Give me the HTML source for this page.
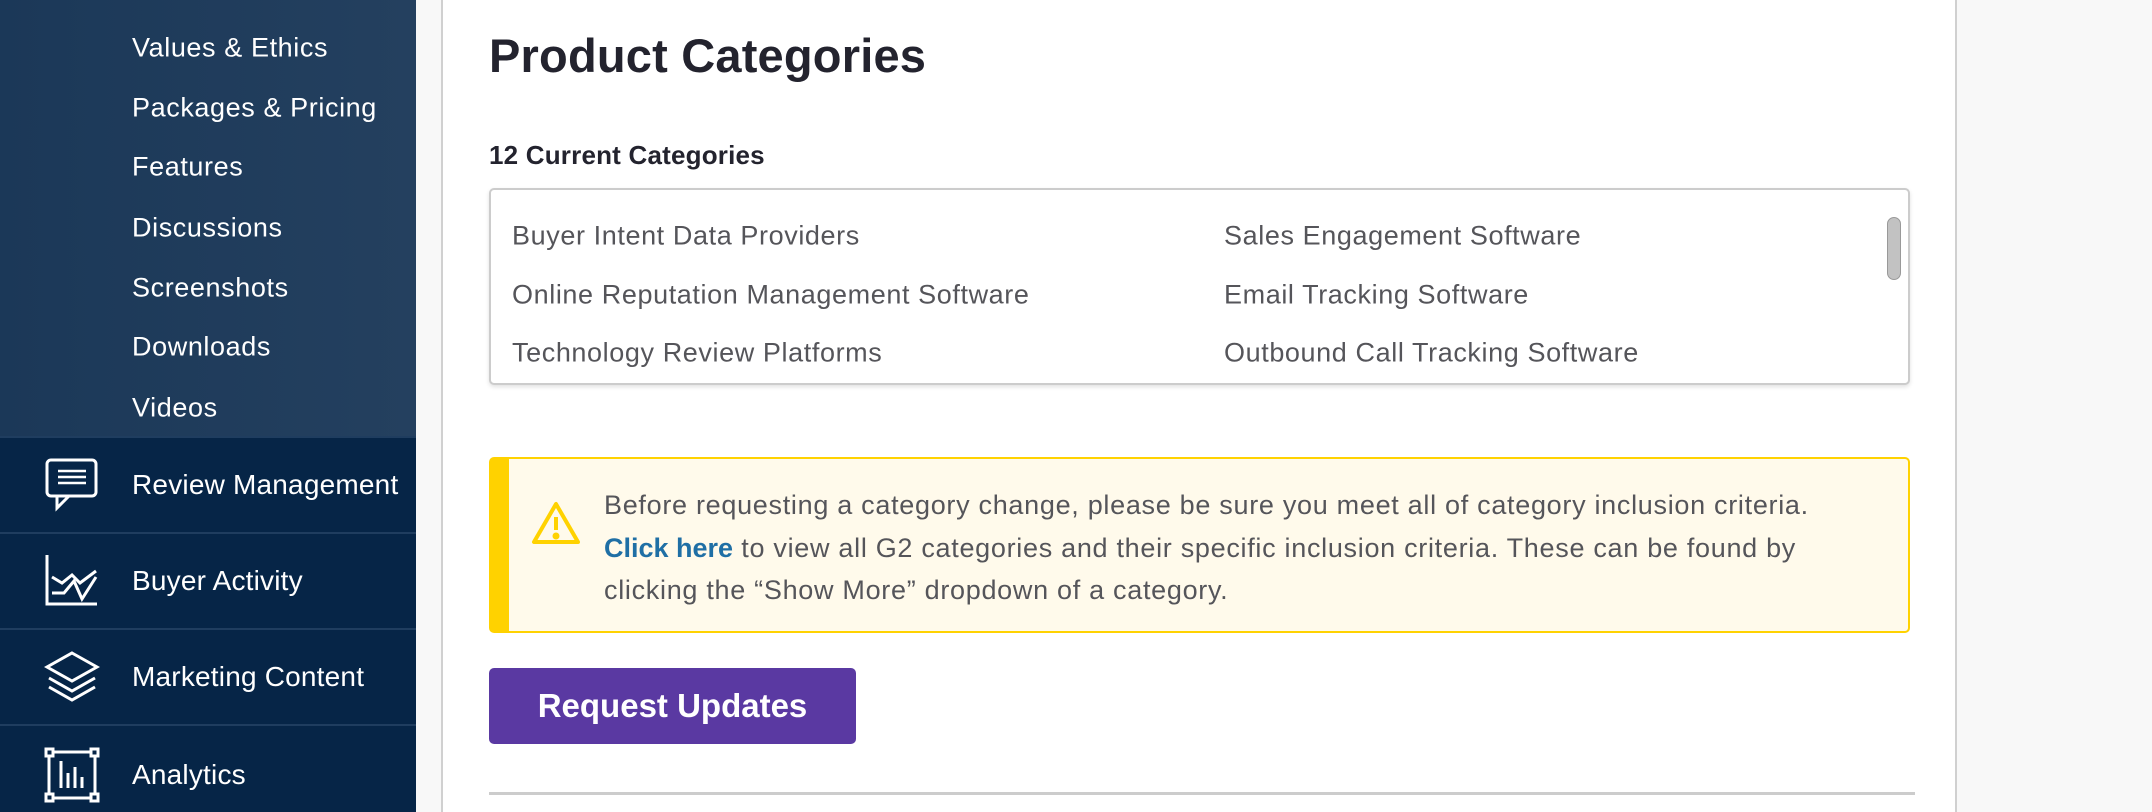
<!DOCTYPE html>
<html><head><meta charset="utf-8"><style>
*{margin:0;padding:0;box-sizing:border-box}
html,body{width:2152px;height:812px;overflow:hidden}
body{background:#f8f8f8;font-family:"Liberation Sans",sans-serif;position:relative}
.side{position:absolute;left:0;top:0;width:416px;height:812px;background:#062547}
.sub{position:absolute;left:0;top:0;width:416px;height:436px;background:linear-gradient(90deg,#1b3858,#24405f)}
.sub div{position:absolute;left:132px;color:#fff;font-size:27px;letter-spacing:0.6px;transform:translateY(-50%)}
.main-item{position:absolute;left:0;width:416px;height:96px;border-top:2px solid #1f3d5f}
.main-item span{position:absolute;left:132px;top:50%;transform:translateY(-50%);color:#fff;font-size:28px;letter-spacing:0.2px}
.main-item svg{position:absolute;left:44px;top:50%;transform:translateY(-50%)}
.panel{position:absolute;left:441px;top:-2px;width:1516px;height:830px;background:#fff;border:2px solid #d0d0d0}
h1{position:absolute;left:489px;top:28px;font-size:47px;color:#23232e;font-weight:bold;letter-spacing:0.2px}
.cc{position:absolute;left:489px;top:140px;font-size:26px;font-weight:bold;color:#23232e;letter-spacing:0.2px}
.box{position:absolute;left:489px;top:188px;width:1421px;height:197px;border:2px solid #ccc;border-radius:5px;box-shadow:0 2px 4px rgba(0,0,0,.12);background:#fff}
.it{position:absolute;font-size:27px;color:#55555a;transform:translateY(-50%);white-space:nowrap;letter-spacing:0.6px}
.scr{position:absolute;left:1887px;top:217px;width:14px;height:63px;border-radius:7px;background:#c2c2c2;border:1px solid #999}
.alert{position:absolute;left:489px;top:457px;width:1421px;height:176px;background:#fffaeb;border:2px solid #ffd200;border-left:20px solid #ffd200;border-radius:5px}
.at{position:absolute;left:604px;top:484px;width:1250px;font-size:27px;line-height:42.5px;color:#55555a;letter-spacing:0.7px}
.at b{color:#1f6fa5;letter-spacing:0}
.btn{position:absolute;left:489px;top:668px;width:367px;height:76px;background:#5a39a2;border-radius:5px;color:#fff;font-size:33px;font-weight:bold;text-align:center;line-height:76px}
.hr{position:absolute;left:489px;top:792px;width:1426px;height:3px;background:#ccc}
</style></head><body>
<div class="side">
<div class="sub">
<div style="top:48px">Values &amp; Ethics</div>
<div style="top:108px">Packages &amp; Pricing</div>
<div style="top:167px">Features</div>
<div style="top:228px">Discussions</div>
<div style="top:288px">Screenshots</div>
<div style="top:347px">Downloads</div>
<div style="top:408px">Videos</div>
</div>
<div class="main-item" style="top:436px"><svg width="56" height="56" viewBox="0 0 56 56" fill="none" stroke="#fff" stroke-width="3"><rect x="3" y="3" width="49" height="36" rx="4"/><path d="M13 39v12l12-12"/><path d="M14 14h28M14 20h28M14 26h28" stroke-width="2.5"/></svg><span>Review Management</span></div>
<div class="main-item" style="top:532px"><svg width="56" height="56" viewBox="0 0 56 56" fill="none" stroke="#fff" stroke-width="3"><path d="M3 2v49h50"/><path d="M8 24l10 6 10-8 8 8 16-12"/><path d="M8 40l12 0 10-12 8 18 14-22"/></svg><span>Buyer Activity</span></div>
<div class="main-item" style="top:628px"><svg width="56" height="56" viewBox="0 0 56 56" fill="none" stroke="#fff" stroke-width="3"><path d="M28 4l25 14-25 14L3 18z"/><path d="M5 29l23 13 23-13"/><path d="M5 38l23 13 23-13"/></svg><span>Marketing Content</span></div>
<div class="main-item" style="top:724px;height:100px"><svg width="56" height="56" viewBox="0 0 56 56" fill="none" stroke="#fff" stroke-width="3"><rect x="5" y="5" width="46" height="46"/><rect x="2" y="2" width="7" height="7" fill="#062547"/><rect x="47" y="2" width="7" height="7" fill="#062547"/><rect x="2" y="47" width="7" height="7" fill="#062547"/><rect x="47" y="47" width="7" height="7" fill="#062547"/><path d="M17 14v27M24 26v15M31 20v21M38 30v11"/></svg><span>Analytics</span></div>
</div>
<div class="panel"></div>
<h1>Product Categories</h1>
<div class="cc">12 Current Categories</div>
<div class="box"></div>
<div class="it" style="left:512px;top:236px">Buyer Intent Data Providers</div>
<div class="it" style="left:512px;top:295px">Online Reputation Management Software</div>
<div class="it" style="left:512px;top:353px">Technology Review Platforms</div>
<div class="it" style="left:1224px;top:236px">Sales Engagement Software</div>
<div class="it" style="left:1224px;top:295px">Email Tracking Software</div>
<div class="it" style="left:1224px;top:353px">Outbound Call Tracking Software</div>
<div class="scr"></div>
<div class="alert"></div>
<svg style="position:absolute;left:531px;top:500px" width="50" height="46" viewBox="0 0 50 46" fill="none" stroke="#ffd200" stroke-width="4" stroke-linejoin="round"><path d="M25 4L3 42h44z"/><path d="M25 17v13" stroke-width="4"/><circle cx="25" cy="36" r="1.5" fill="#ffd200"/></svg>
<div class="at">Before requesting a category change, please be sure you meet all of category inclusion criteria.<br><b>Click here</b> to view all G2 categories and their specific inclusion criteria. These can be found by<br>clicking the “Show More” dropdown of a category.</div>
<div class="btn">Request Updates</div>
<div class="hr"></div>
</body></html>
